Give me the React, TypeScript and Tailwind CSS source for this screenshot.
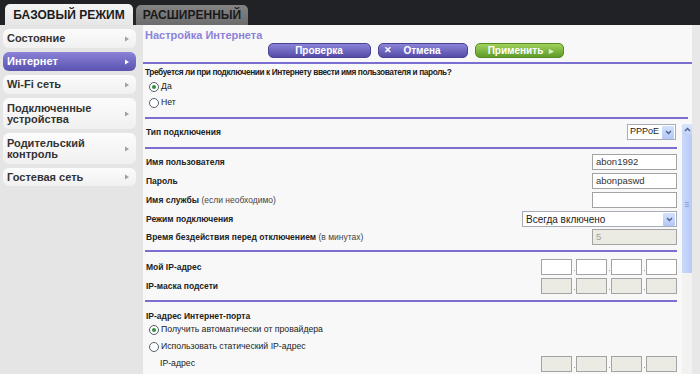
import React from "react";

function Arrow({ white }: { white?: boolean }) {
  return (
    <svg width="4" height="6" viewBox="0 0 4 6" className="shrink-0">
      <path d="M0 0.5 L4 3 L0 5.5 Z" fill={white ? "#ffffff" : "#a0a0a0"} />
    </svg>
  );
}

function SideItem({ label, active, h }: { label: React.ReactNode; active?: boolean; h: string }) {
  return (
    <div
      className={
        "w-[133px] rounded-[6px] flex items-center justify-between pl-[4px] pr-[7px] text-[11px] leading-[11px] font-bold " +
        h +
        " " +
        (active
          ? "bg-linear-to-b from-[#8a83d6] to-[#5b53b0] text-white"
          : "bg-linear-to-b from-[#fcfcfc] to-[#f0f0f0] text-[#333333]")
      }
    >
      <div>{label}</div>
      <Arrow white={active} />
    </div>
  );
}

function Btn({ color, children, w }: { color: "p" | "g"; children: React.ReactNode; w: string }) {
  return (
    <div
      className={
        "h-[15px] rounded-[5px] border flex items-center justify-center text-[10px] font-bold text-white leading-none " +
        w +
        " " +
        (color === "p"
          ? "bg-linear-to-b from-[#8b84d9] to-[#554da8] border-[#4a4392]"
          : "bg-linear-to-b from-[#a2d25a] to-[#5f9c2b] border-[#558c25]")
      }
    >
      {children}
    </div>
  );
}

function Radio({ checked }: { checked?: boolean }) {
  return (
    <div className="w-[10px] h-[10px] rounded-full border border-[#55606c] bg-white flex items-center justify-center shrink-0">
      {checked && <div className="w-[4px] h-[4px] rounded-full bg-[#2f8f3c]" />}
    </div>
  );
}

function Line({ className }: { className?: string }) {
  return <div className={"h-[2px] bg-[#7a6fd1] " + (className || "")} />;
}

function TextInput({ value, disabled }: { value?: string; disabled?: boolean }) {
  return (
    <div
      className={
        "w-[85px] h-[16px] border border-[#a3a3a3] flex items-center pl-[3px] text-[9.5px] " +
        (disabled ? "bg-[#ebebe4] text-[#a0a0a0]" : "bg-white text-[#333333]")
      }
    >
      {value}
    </div>
  );
}

function DropBtn() {
  return (
    <div className="w-[12px] h-[13px] mr-[1px] bg-linear-to-b from-[#d4e1fc] to-[#b3c7f5] rounded-[1px] flex items-center justify-center shrink-0">
      <svg width="7" height="5" viewBox="0 0 7 5">
        <path d="M1 1 L3.5 3.5 L6 1" stroke="#4d6290" strokeWidth="1.4" fill="none" />
      </svg>
    </div>
  );
}

function Select({ value, w, small }: { value: string; w: string; small?: boolean }) {
  return (
    <div
      className={
        "h-[16px] border border-[#a7adb6] bg-white flex items-center justify-between text-[#222222] " +
        (small ? "pl-[2px] text-[9px] " : "pl-[3px] text-[10px] ") +
        w
      }
    >
      <span>{value}</span>
      <DropBtn />
    </div>
  );
}

function IpBoxes({ gray }: { gray?: boolean }) {
  const box = "w-[31px] h-[16px] border border-[#a3a3a3] " + (gray ? "bg-[#ebebe4]" : "bg-white");
  const dot = (
    <div className="w-[4px] h-[16px] flex items-end justify-center pb-[4px]">
      <div className="w-[1px] h-[1px] bg-[#999999]" />
    </div>
  );
  return (
    <div className="flex">
      <div className={box} />
      {dot}
      <div className={box} />
      {dot}
      <div className={box} />
      {dot}
      <div className={box} />
    </div>
  );
}

function Row({ label, children, className }: { label: React.ReactNode; children?: React.ReactNode; className?: string }) {
  return (
    <div className={"h-[16px] flex items-center justify-between pl-[3px] " + (className || "")}>
      <div className="text-[8.5px] font-bold text-[#222222] leading-none">{label}</div>
      {children}
    </div>
  );
}

export default function App() {
  return (
    <div className="w-[700px] h-[392px] bg-white overflow-hidden font-['Liberation_Sans',Arial,sans-serif]">
      {/* top bar */}
      <div className="h-[25px] bg-[#202226] flex items-end pl-[5px] gap-[3px]">
        <div className="w-[128px] h-[21px] rounded-t-[5px] bg-linear-to-b from-[#f4f4f4] to-[#e6e6e6] flex items-center justify-center text-[12px] font-bold text-[#1c1c1c]">
          БАЗОВЫЙ РЕЖИМ
        </div>
        <div className="w-[112px] h-[20px] rounded-t-[5px] bg-linear-to-b from-[#848484] to-[#6c6c6c] flex items-center justify-center text-[12px] font-bold text-[#1a1a1a]">
          РАСШИРЕННЫЙ
        </div>
      </div>

      <div className="flex h-[349px]">
        {/* sidebar */}
        <div className="w-[143px] bg-[#e5e5e5] pt-[4px] pl-[3px] flex flex-col gap-[4px]">
          <SideItem label="Состояние" h="h-[19px]" />
          <SideItem label="Интернет" active h="h-[19px]" />
          <SideItem label="Wi-Fi сеть" h="h-[19px]" />
          <SideItem label={<>Подключенные<br />устройства</>} h="h-[31px]" />
          <SideItem label={<>Родительский<br />контроль</>} h="h-[31px]" />
          <SideItem label="Гостевая сеть" h="h-[18px]" />
        </div>

        {/* main */}
        <div className="w-[549px] bg-[#f8f8f8] flex flex-col overflow-hidden">
          <div className="h-[18px] pt-[4px] pl-[2px] text-[11px] leading-[12px] font-bold text-[#8c82d9]">
            Настройка Интернета
          </div>
          <div className="flex justify-center gap-[7px] pr-[4px]">
            <Btn color="p" w="w-[103px]">Проверка</Btn>
            <Btn color="p" w="w-[90px]">
              <div className="w-full flex items-center pl-[5px]">
                <span className="text-[9px]">✕</span>
                <span className="flex-1 text-center pr-[14px]">Отмена</span>
              </div>
            </Btn>
            <Btn color="g" w="w-[89px]">
              <span className="pl-[4px]">Применить</span>
              <span className="ml-[6px] text-[6px] text-[#dff0c8]">▶</span>
            </Btn>
          </div>
          <Line className="mt-[4px]" />
          <div className="mt-[2px] pl-[2px] h-[12px] flex items-center text-[8.3px] tracking-[-0.4px] font-bold text-[#222222]">
            Требуется ли при подключении к Интернету ввести имя пользователя и пароль?
          </div>
          <div className="mt-[3px] pl-[6px] h-[12px] flex items-center gap-[2px] text-[8.7px] text-[#222222]">
            <Radio checked />
            <span>Да</span>
          </div>
          <div className="mt-[4px] pl-[6px] h-[12px] flex items-center gap-[2px] text-[8.7px] text-[#222222]">
            <Radio />
            <span>Нет</span>
          </div>
          <Line className="mt-[8px] ml-[2px] mr-[4px]" />

          {/* scroll area */}
          <div className="flex flex-1 min-h-0">
            <div className="flex-1 pr-[5px] flex flex-col overflow-hidden">
              <Row label="Тип подключения" className="mt-[5px]">
                <Select value="PPPoE" w="w-[49px] mr-[1px]" small />
              </Row>
              <Line className="mt-[7px] ml-[2px]" />
              <Row label="Имя пользователя" className="mt-[5px]">
                <TextInput value="abon1992" />
              </Row>
              <Row label="Пароль" className="mt-[3px]">
                <TextInput value="abonpaswd" />
              </Row>
              <Row
                label={<>Имя службы <span className="font-normal text-[#444444]">(если необходимо)</span></>}
                className="mt-[3px]"
              >
                <TextInput />
              </Row>
              <Row label="Режим подключения" className="mt-[3px]">
                <Select value="Всегда включено" w="w-[155px]" />
              </Row>
              <Row
                label={<>Время бездействия перед отключением <span className="font-normal text-[#444444]">(в минутах)</span></>}
                className="mt-[2px]"
              >
                <TextInput value="5" disabled />
              </Row>
              <Line className="mt-[5px] ml-[2px]" />
              <Row label="Мой IP-адрес" className="mt-[7px]">
                <IpBoxes />
              </Row>
              <Row label="IP-маска подсети" className="mt-[3px]">
                <IpBoxes gray />
              </Row>
              <Line className="mt-[6px] ml-[2px]" />
              <div className="mt-[8px] pl-[3px] h-[12px] flex items-center text-[8.5px] font-bold text-[#222222]">
                IP-адрес Интернет-порта
              </div>
              <div className="mt-[2px] pl-[6px] h-[12px] flex items-center gap-[2px] text-[8.7px] text-[#222222]">
                <Radio checked />
                <span>Получить автоматически от провайдера</span>
              </div>
              <div className="mt-[5px] pl-[6px] h-[12px] flex items-center gap-[2px] text-[8.7px] text-[#222222]">
                <Radio />
                <span>Использовать статический IP-адрес</span>
              </div>
              <div className="mt-[3px] h-[16px] shrink-0 flex items-center justify-between pl-[17px]">
                <div className="text-[8.7px] text-[#222222]">IP-адрес</div>
                <IpBoxes gray />
              </div>
            </div>
            {/* scrollbar */}
            <div className="w-[10px] mt-[5px] flex flex-col bg-[#f2f2f0]">
              <div className="h-[11px] bg-linear-to-b from-[#dce6fb] to-[#bfd0f7] flex items-center justify-center rounded-[1px]">
                <svg width="7" height="5" viewBox="0 0 7 5">
                  <path d="M1 4 L3.5 1.5 L6 4" stroke="#4d6290" strokeWidth="1.4" fill="none" />
                </svg>
              </div>
              <div className="h-[138px] bg-linear-to-r from-[#c9d8fb] to-[#b8cbf6] flex items-center justify-center">
                <div className="flex flex-col gap-[1px]">
                  <div className="w-[4px] h-[1px] bg-[#8ea6dc]" />
                  <div className="w-[4px] h-[1px] bg-[#8ea6dc]" />
                  <div className="w-[4px] h-[1px] bg-[#8ea6dc]" />
                </div>
              </div>
            </div>
          </div>
        </div>

        <div className="w-[8px] bg-[#e8e8e8]" />
      </div>
    </div>
  );
}
